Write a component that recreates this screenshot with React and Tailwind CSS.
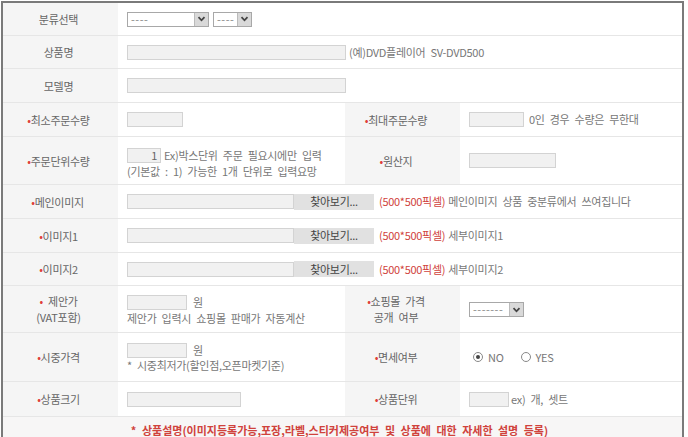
import React from "react";

function Req() {
  return <span className="text-[#e0403a]">•</span>;
}

function Label({ children, className = "" }) {
  return (
    <div className={`bg-[#f5f5f5] flex flex-col items-center justify-center text-center text-[#666] leading-[16px] ${className}`}>
      {children}
    </div>
  );
}

function Input({ className = "" }) {
  return <div className={`h-[15px] border border-[#d3d3d3] bg-[#f1f1f1] shrink-0 ${className}`}></div>;
}

function Arrow() {
  return (
    <div className="w-[14px] self-stretch bg-[#d9d9d9] border-l border-[#bbb] flex items-center justify-center">
      <svg width="9" height="6" viewBox="0 0 9 6">
        <path d="M1.5 1.2 L4.5 4.3 L7.5 1.2" stroke="#444" strokeWidth="1.8" fill="none" />
      </svg>
    </div>
  );
}

function Select({ text, className = "" }) {
  return (
    <div className={`h-[15px] border border-[#a8a8a8] bg-white flex items-stretch ${className}`}>
      <div className="flex-1 pl-[3px] text-[#888] leading-[12px] tracking-[0.5px]">{text}</div>
      <Arrow />
    </div>
  );
}

function FileInput({ note }) {
  return (
    <div className="flex items-center">
      <Input className="w-[167px]" />
      <div className="h-[16px] w-[80px] bg-[#e1e1e1] flex items-center justify-center text-[#444]">찾아보기...</div>
      <span className="ml-[5px] text-[#d0423c]">(500*500픽셀)</span>
      <span className="ml-[3px] text-[#777]">{note}</span>
    </div>
  );
}

function Radio({ checked }) {
  return (
    <span className="w-[10px] h-[10px] rounded-full border border-[#888] bg-white flex items-center justify-center">
      {checked && <span className="w-[4px] h-[4px] rounded-full bg-[#444]"></span>}
    </span>
  );
}

export default function App() {
  const half = "grid grid-cols-[115px_227px_115px_1fr] border-b border-[#e6e6e6]";
  const full = "grid grid-cols-[115px_1fr] border-b border-[#e6e6e6]";
  const val = "flex items-center pl-[9px] text-[#777]";

  return (
    <div className="bg-white w-[688px] h-[437px] overflow-hidden">
      <div className="ml-px mt-px w-[683px] border-2 border-b-0 border-[#7a7a7a] text-[11px] tracking-[-0.3px] [word-spacing:3px] font-['Noto_Sans_CJK_KR',sans-serif]">
        <div className={`${full} h-[33px]`}>
          <Label className="pr-[4px]">분류선택</Label>
          <div className={val}>
            <Select text="----" className="w-[82px]" />
            <Select text="----" className="w-[39px] ml-[4px]" />
          </div>
        </div>

        <div className={`${full} h-[33px]`}>
          <Label className="pr-[4px]">상품명</Label>
          <div className={val}>
            <Input className="w-[219px]" />
            <span className="ml-[3px]">(예)DVD플레이어 SV-DVD500</span>
          </div>
        </div>

        <div className={`${full} h-[34px]`}>
          <Label className="pr-[4px]">모델명</Label>
          <div className={val}>
            <Input className="w-[219px]" />
          </div>
        </div>

        <div className={`${half} h-[34px]`}>
          <Label className="pr-[4px]"><span><Req />최소주문수량</span></Label>
          <div className={val}>
            <Input className="w-[56px]" />
          </div>
          <Label className="pr-[13px]"><span><Req />최대주문수량</span></Label>
          <div className={val}>
            <Input className="w-[55px]" />
            <span className="ml-[5px]">0인 경우 수량은 무한대</span>
          </div>
        </div>

        <div className={`${half} h-[48px]`}>
          <Label className="pr-[4px]"><span><Req />주문단위수량</span></Label>
          <div className="flex flex-col pl-[9px] pt-[10px] text-[#777]">
            <div className="h-[16px] flex items-center">
              <div className="h-[15px] w-[34px] border border-[#d3d3d3] bg-[#f1f1f1] text-right pr-[3px] leading-[12px] text-[#666]">1</div>
              <span className="ml-[3px]">Ex)박스단위 주문 필요시에만 입력</span>
            </div>
            <div className="leading-[14px] mt-[1px]">(기본값 : 1) 가능한 1개 단위로 입력요망</div>
          </div>
          <Label className="pr-[13px]"><span><Req />원산지</span></Label>
          <div className={val}>
            <Input className="w-[87px]" />
          </div>
        </div>

        <div className={`${full} h-[34px]`}>
          <Label className="pr-[6px]"><span><Req />메인이미지</span></Label>
          <div className={val}>
            <FileInput note="메인이미지 상품 중분류에서 쓰여집니다" />
          </div>
        </div>

        <div className={`${full} h-[34px]`}>
          <Label className="pr-[4px]"><span><Req />이미지1</span></Label>
          <div className={val}>
            <FileInput note="세부이미지1" />
          </div>
        </div>

        <div className={`${full} h-[33px]`}>
          <Label className="pr-[4px]"><span><Req />이미지2</span></Label>
          <div className={val}>
            <FileInput note="세부이미지2" />
          </div>
        </div>

        <div className={`${half} h-[47px]`}>
          <Label className="pr-[4px]">
            <span><Req /> 제안가</span>
            <span>(VAT포함)</span>
          </Label>
          <div className="flex flex-col pl-[9px] pt-[8px] text-[#777]">
            <div className="h-[16px] flex items-center">
              <Input className="w-[60px]" />
              <span className="ml-[6px]">원</span>
            </div>
            <div className="leading-[14px] mt-[1px]">제안가 입력시 쇼핑몰 판매가 자동계산</div>
          </div>
          <Label className="pr-[13px]">
            <span><Req />쇼핑몰 가격</span>
            <span>공개 여부</span>
          </Label>
          <div className={val}>
            <Select text="-------" className="w-[55px] mt-[1px]" />
          </div>
        </div>

        <div className={`${half} h-[49px]`}>
          <Label className="pr-[4px]"><span><Req />시중가격</span></Label>
          <div className="flex flex-col pl-[9px] pt-[9px] text-[#777]">
            <div className="h-[16px] flex items-center">
              <Input className="w-[60px]" />
              <span className="ml-[6px]">원</span>
            </div>
            <div className="leading-[14px]">* 시중최저가(할인점,오픈마켓기준)</div>
          </div>
          <Label className="pr-[13px]"><span><Req />면세여부</span></Label>
          <div className={`${val} pl-[13px]`}>
            <Radio checked />
            <span className="ml-[5px]">NO</span>
            <span className="ml-[17px]"><Radio /></span>
            <span className="ml-[5px]">YES</span>
          </div>
        </div>

        <div className={`${half} h-[35px]`}>
          <Label className="pr-[4px]"><span><Req />상품크기</span></Label>
          <div className={val}>
            <Input className="w-[114px]" />
          </div>
          <Label className="pr-[13px]"><span><Req />상품단위</span></Label>
          <div className={val}>
            <Input className="w-[40px]" />
            <span className="ml-[2px]">ex) 개, 셋트</span>
          </div>
        </div>

        <div className="h-[20px] bg-[#f7f6f6] flex items-end justify-center pr-[6px] pb-[1px] leading-[12px] tracking-[0px] font-bold text-[#d0423c]">
          * 상품설명(이미지등록가능,포장,라벨,스티커제공여부 및 상품에 대한 자세한 설명 등록)
        </div>
      </div>
    </div>
  );
}
